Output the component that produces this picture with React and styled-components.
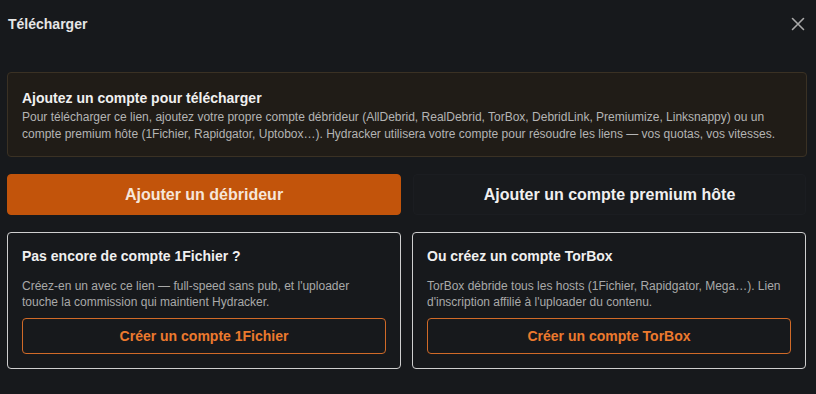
import React from "react";
import styled, { createGlobalStyle } from "styled-components";

const Global = createGlobalStyle`
  html, body { margin: 0; padding: 0; background: #17191c; }
  body { font-family: "Liberation Sans", Arial, sans-serif; color: #e8e8e8; }
  * { box-sizing: border-box; }
`;

const Dialog = styled.div`
  width: 816px;
  height: 394px;
  background: #17191c;
  padding: 0 9px 0 7px;
  display: flex;
  flex-direction: column;
`;

const Header = styled.div`
  height: 48px;
  display: flex;
  align-items: center;
  justify-content: space-between;
  padding-left: 1px;
`;

const Title = styled.h2`
  margin: 0;
  font-size: 14px;
  font-weight: 700;
  color: #e6e6e6;
`;

const Close = styled.button`
  background: none;
  border: 0;
  padding: 0;
  margin-right: -1px;
  width: 20px;
  height: 20px;
  display: flex;
  align-items: center;
  justify-content: center;
  color: #a9a9a9;
  cursor: pointer;
`;

const Notice = styled.div`
  margin-top: 24px;
  background: #201c17;
  border: 1px solid #3a3124;
  border-radius: 4px;
  padding: 16px 14px 13px;
`;

const NoticeTitle = styled.div`
  font-size: 14px;
  font-weight: 700;
  color: #f0f0f0;
  line-height: 18px;
  margin-bottom: 2px;
`;

const NoticeText = styled.p`
  margin: 0;
  font-size: 12px;
  line-height: 17px;
  color: #b4b4b4;
`;

const Row = styled.div`
  margin-top: 17px;
  display: grid;
  grid-template-columns: 394px 393px;
  column-gap: 12px;
`;

const BigButton = styled.button`
  height: 41px;
  border-radius: 4px;
  font-family: inherit;
  font-size: 16px;
  font-weight: 700;
  cursor: pointer;
  border: 1px solid ${(p) => (p.$primary ? "#c2540b" : "#1b1d21")};
  background: ${(p) => (p.$primary ? "#c2540b" : "#181a1d")};
  color: ${(p) => (p.$primary ? "#f6e6da" : "#f0f0f0")};
`;

const Cards = styled(Row)`
  margin-top: 17px;
  column-gap: 11px;
  grid-template-columns: 394px 394px;
`;

const Card = styled.div`
  height: 137px;
  border: 1px solid #cfcfcf;
  border-radius: 4px;
  background: #17191c;
  padding: 15px 14px 14px;
  display: flex;
  flex-direction: column;
`;

const CardTitle = styled.div`
  font-size: 14px;
  font-weight: 700;
  line-height: 17px;
  color: #f0f0f0;
  margin-bottom: 13px;
`;

const CardText = styled.p`
  margin: 0;
  font-size: 12px;
  line-height: 16px;
  color: #a9a9a9;
  flex: 1;
`;

const OutlineButton = styled.button`
  height: 36px;
  border: 1px solid #d06a28;
  border-radius: 4px;
  background: #17191c;
  color: #ec7a2e;
  font-family: inherit;
  font-size: 14px;
  font-weight: 700;
  cursor: pointer;
`;

export default function App() {
  return (
    <>
      <Global />
      <Dialog>
        <Header>
          <Title>Télécharger</Title>
          <Close aria-label="Fermer">
            <svg width="14" height="14" viewBox="0 0 14 14" fill="none" stroke="currentColor" strokeWidth="1.6" strokeLinecap="round">
              <path d="M1.5 1.5 L12.5 12.5 M12.5 1.5 L1.5 12.5" />
            </svg>
          </Close>
        </Header>
        <Notice>
          <NoticeTitle>Ajoutez un compte pour télécharger</NoticeTitle>
          <NoticeText>
            Pour télécharger ce lien, ajoutez votre propre compte débrideur (AllDebrid, RealDebrid, TorBox, DebridLink, Premiumize, Linksnappy) ou un
            compte premium hôte (1Fichier, Rapidgator, Uptobox…). Hydracker utilisera votre compte pour résoudre les liens — vos quotas, vos vitesses.
          </NoticeText>
        </Notice>
        <Row>
          <BigButton $primary>Ajouter un débrideur</BigButton>
          <BigButton>Ajouter un compte premium hôte</BigButton>
        </Row>
        <Cards>
          <Card>
            <CardTitle>Pas encore de compte 1Fichier ?</CardTitle>
            <CardText>
              Créez-en un avec ce lien — full-speed sans pub, et l'uploader touche la commission qui maintient Hydracker.
            </CardText>
            <OutlineButton>Créer un compte 1Fichier</OutlineButton>
          </Card>
          <Card>
            <CardTitle>Ou créez un compte TorBox</CardTitle>
            <CardText>
              TorBox débride tous les hosts (1Fichier, Rapidgator, Mega…). Lien d'inscription affilié à l'uploader du contenu.
            </CardText>
            <OutlineButton>Créer un compte TorBox</OutlineButton>
          </Card>
        </Cards>
      </Dialog>
    </>
  );
}
